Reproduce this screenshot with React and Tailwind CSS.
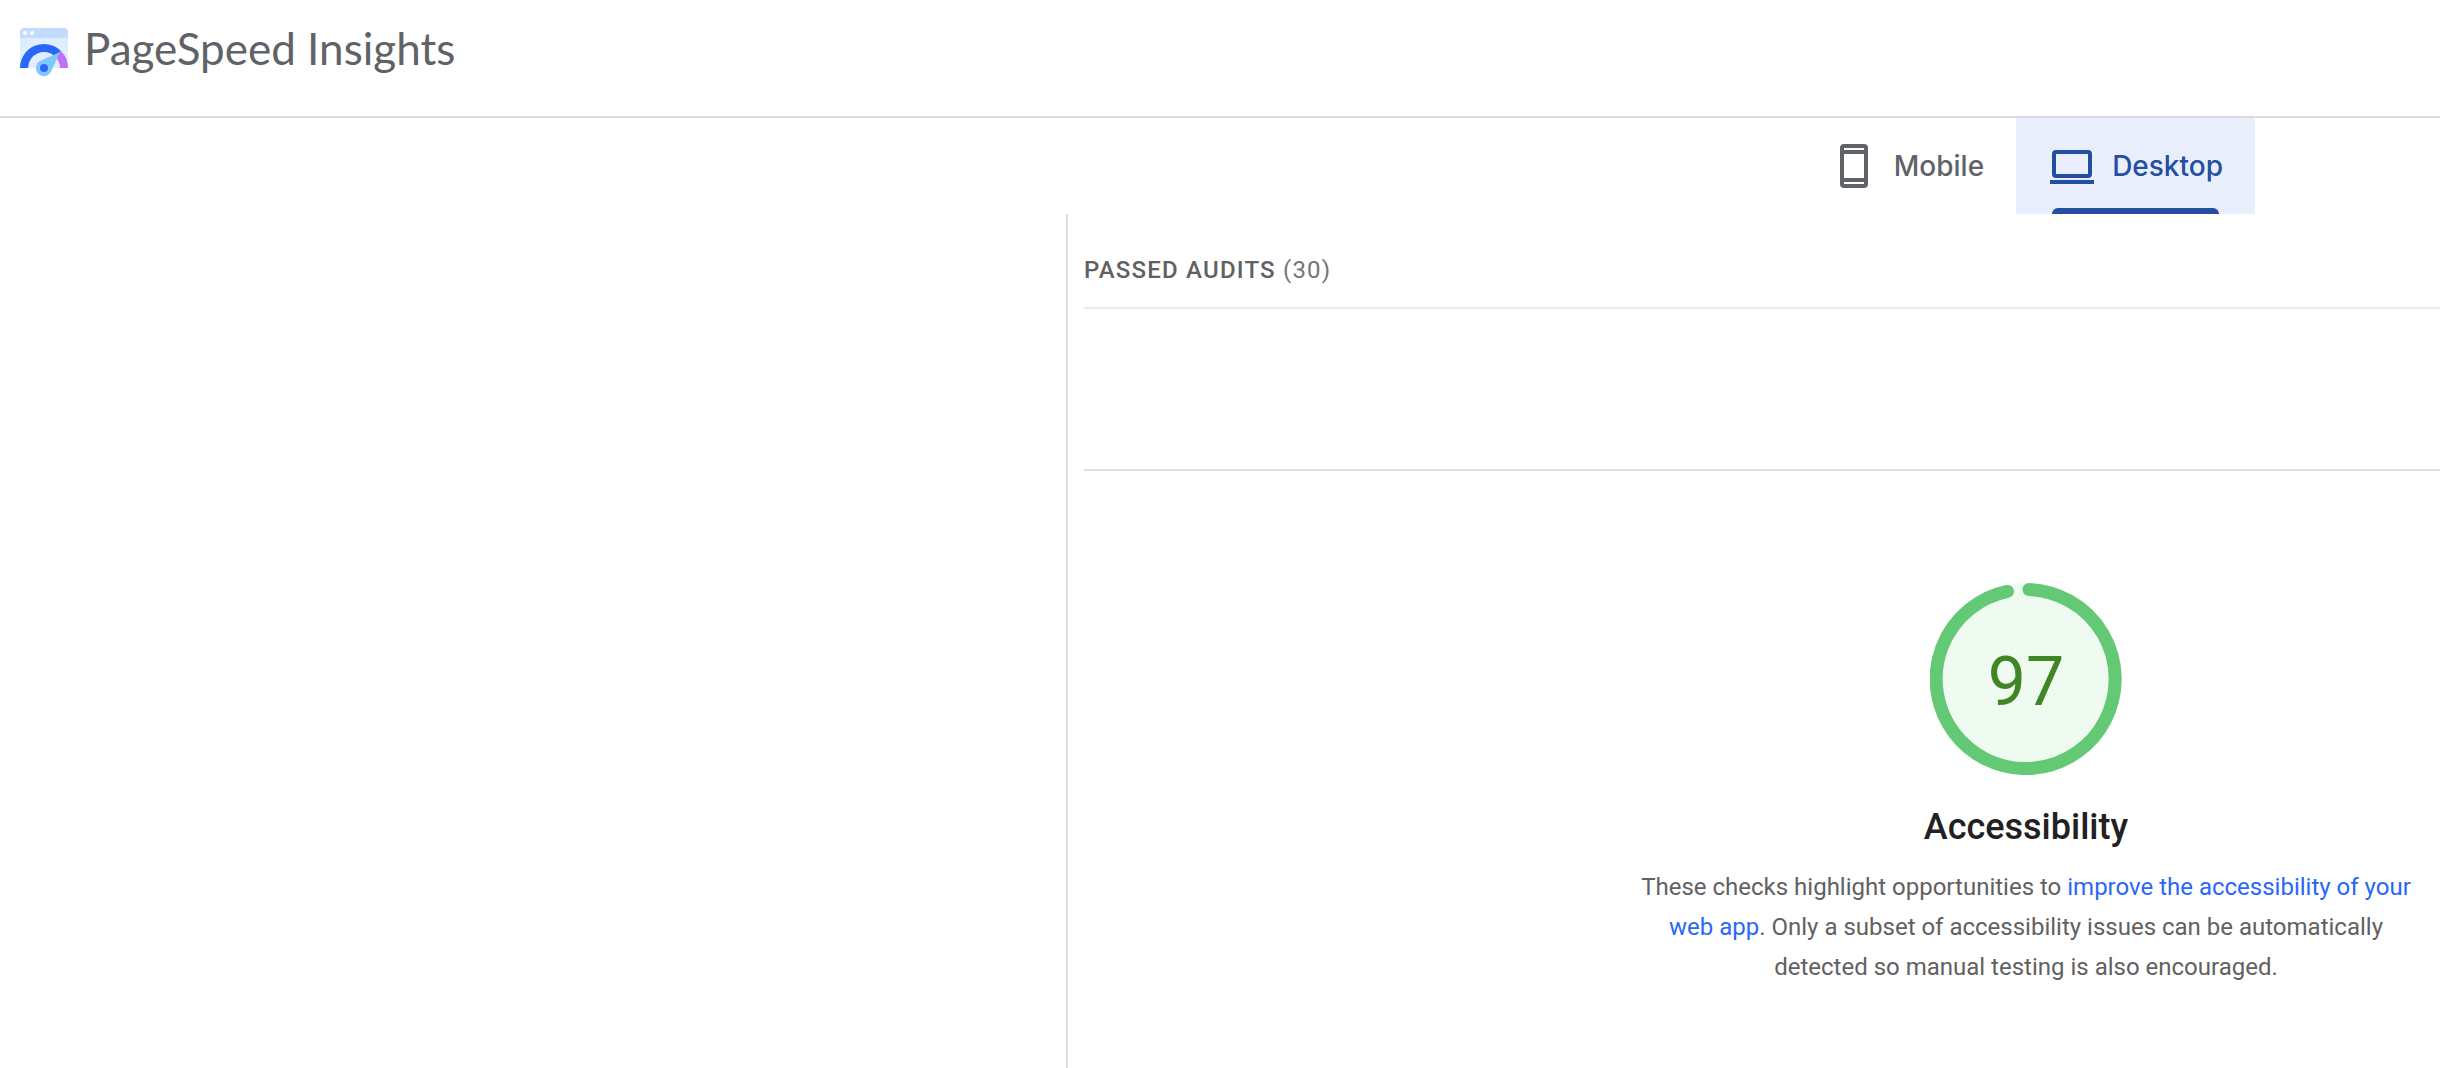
function Logo() {
  return (
    <svg viewBox="0 0 48 48" className="size-12 shrink-0" aria-hidden="true">
      <path d="M0 10H48V40H0Z" fill="#e0edfd" />
      <path d="M4 0H44A4 4 0 0 1 48 4V10H0V4A4 4 0 0 1 4 0Z" fill="#c3dcfb" />
      <circle cx="5" cy="5" r="2" fill="#fff" />
      <circle cx="12" cy="5" r="2" fill="#fff" />
      <path d="M0 40A24 24 0 0 1 41 23L35.3 28.7A16 16 0 0 0 8 40Z" fill="#2a67f8" />
      <path d="M41 23A24 24 0 0 1 48 40H40A16 16 0 0 0 35.3 28.7Z" fill="#bd72f8" />
      <path d="M40 24L20 33.1A8 8 0 1 0 31 43.8Z" fill="#82c8fd" />
      <circle cx="24" cy="40" r="4" fill="#2a67f8" />
    </svg>
  );
}

function PhoneIcon() {
  return (
    <svg viewBox="0 0 48 48" className="size-12" fill="currentColor" fillRule="evenodd" aria-hidden="true">
      <path d="M14 2H34A4 4 0 0 1 38 6V42A4 4 0 0 1 34 46H14A4 4 0 0 1 10 42V6A4 4 0 0 1 14 2ZM14 6V8H34V6ZM14 12V36H34V12ZM14 40V42H34V40Z" />
    </svg>
  );
}

function LaptopIcon() {
  return (
    <svg viewBox="0 0 48 48" className="size-12" fill="currentColor" fillRule="evenodd" aria-hidden="true">
      <path d="M8 8H40A4 4 0 0 1 44 12V32A4 4 0 0 1 40 36H8A4 4 0 0 1 4 32V12A4 4 0 0 1 8 8ZM8 12V32H40V12ZM2 38H46V42H2Z" />
    </svg>
  );
}

function Tab({ icon, label, selected }) {
  return (
    <button
      type="button"
      role="tab"
      aria-selected={selected}
      className={
        selected
          ? "relative flex h-24 items-center gap-4 bg-[#e8eefc] px-8 text-[#254ea1]"
          : "relative flex h-24 items-center gap-4 px-8 text-[#5f6368]"
      }
    >
      {icon}
      <span className="font-['Inter',sans-serif] text-[28px] leading-9 font-medium">{label}</span>
      {selected && <span className="absolute inset-x-9 bottom-0 h-1.5 rounded-t-md bg-[#254ea1]" />}
    </button>
  );
}

function Gauge({ score }) {
  return (
    <div className="grid size-48 place-items-center">
      <svg viewBox="0 0 192 192" className="col-start-1 row-start-1 size-48" aria-hidden="true">
        <circle cx="96" cy="96" r="96" fill="#effaf1" />
        <path d="M99 6.6A89.5 89.5 0 1 1 77.5 8.4" fill="none" stroke="#64c974" strokeWidth="13" strokeLinecap="round" />
      </svg>
      <span className="col-start-1 row-start-1 pt-1.5 text-[68px] leading-none text-[#3f8624]">{score}</span>
    </div>
  );
}

export default function App() {
  return (
    <div className="flex min-h-screen flex-col overflow-x-hidden bg-white font-['Roboto',sans-serif] text-[#616161]">
      <header className="flex h-[118px] items-start gap-4 border-b-2 border-[#dadce0] px-5 pt-7">
        <Logo />
        <h1 className="font-['Lato',sans-serif] text-[44px] leading-10 text-[#5f6368]">PageSpeed Insights</h1>
      </header>
      <nav role="tablist" aria-label="Device" className="flex justify-end pr-[185px]">
        <Tab icon={<PhoneIcon />} label="Mobile" selected={false} />
        <Tab icon={<LaptopIcon />} label="Desktop" selected />
      </nav>
      <div className="flex grow">
        <aside className="w-[1066px] shrink-0" />
        <main className="grow border-l-2 border-[#dadce0] pl-4">
          <h2 className="border-b-2 border-[#ebebeb] pt-10 pb-[21px] text-2xl leading-8 font-medium tracking-wider uppercase">
            Passed audits <span className="font-normal text-[#757575]">(30)</span>
          </h2>
          <section className="mt-40 flex flex-col items-end border-t-2 border-[#e0e0e0] pt-28">
            <div className="mr-3.5 flex w-[800px] flex-col items-center text-center">
              <Gauge score={97} />
              <h3 className="mt-8 text-4xl leading-10 font-medium text-[#212121]">Accessibility</h3>
              <p className="mt-5 text-2xl leading-10">
                These checks highlight opportunities to{" "}
                <a href="#accessibility" className="text-[#2a67f8]">improve the accessibility of your web app</a>. Only a
                subset of accessibility issues can be automatically detected so manual testing is also encouraged.
              </p>
            </div>
          </section>
        </main>
      </div>
    </div>
  );
}
